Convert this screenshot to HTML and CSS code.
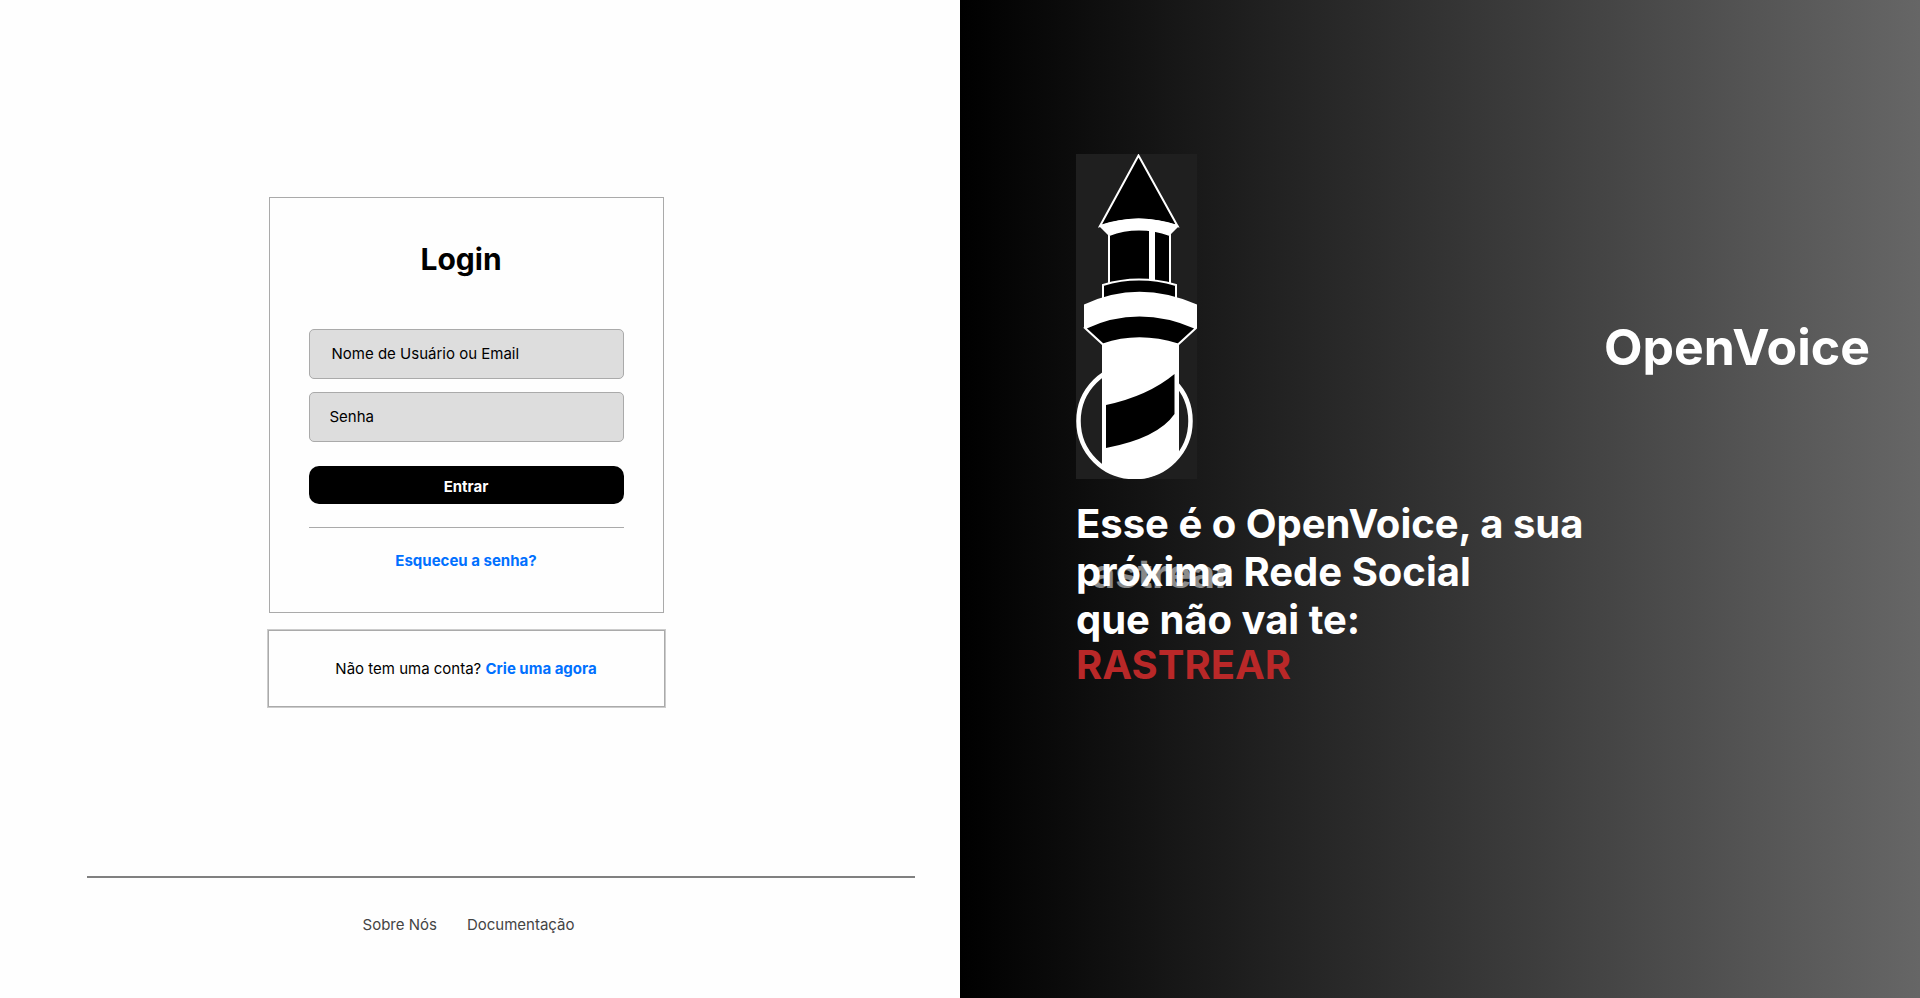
FILE: index.html
```html
<!DOCTYPE html>
<html lang="pt-BR">
<head>
<meta charset="utf-8">
<title>OpenVoice - Login</title>
<link rel="stylesheet" href="styles.css">
</head>
<body>
<div class="page">
  <div class="access">
    <main class="access-main">
      <form class="card login">
        <h1 class="login-title">Login</h1>
        <input class="field field-user" type="text" aria-label="Nome de Usuário ou Email" placeholder="Nome de Usuário ou Email">
        <input class="field" type="password" aria-label="Senha" placeholder="Senha">
        <button class="submit" type="submit">Entrar</button>
        <hr class="divider">
        <a class="link" href="#">Esqueceu a senha?</a>
      </form>
      <p class="card signup">Não tem uma conta? <a class="link" href="#">Crie uma agora</a></p>
    </main>
    <footer class="footer">
      <a class="footer-link" href="#">Sobre Nós</a>
      <a class="footer-link" href="#">Documentação</a>
    </footer>
  </div>
  <aside class="brand">
    <div class="brand-head">
      <svg class="logo" viewBox="0 0 121 325" role="img" aria-label="Farol">
        <rect width="121" height="325" fill="#1f1f1f"/>
        <circle cx="58.500" cy="267" r="56" fill="none" stroke="#fff" stroke-width="4.500"/>
        <path d="M62.500 1.500L24 72Q62.500 59 101.500 72Z" fill="#000" stroke="#fff" stroke-width="2"/>
        <path d="M23 72Q62.500 57 103 72L94 81Q62.500 70 32 81Z" fill="#fff"/>
        <path d="M33 81Q62.500 70 94 81V131Q62.500 121 33 131Z" fill="#000" stroke="#fff" stroke-width="2"/>
        <path d="M73 74H79V127H73Z" fill="#fff"/>
        <path d="M27 131Q62.500 120 100 131V148H27Z" fill="#000" stroke="#fff" stroke-width="2"/>
        <path d="M8 150.500Q62.500 125 121 150.500V174H8Z" fill="#fff"/>
        <path d="M9 174Q62.500 149 120 174L102 190.500Q62.500 178 27 190.500Z" fill="#000" stroke="#fff" stroke-width="2"/>
        <path d="M26 190.500Q62.500 178 103 190.500V303Q84 325 59 325Q41 325 26 311Z" fill="#fff"/>
        <path d="M30 251Q72 242 98.500 220V260Q82 284 30 294Z" fill="#000"/>
      </svg>
      <h2 class="brand-name">OpenVoice</h2>
    </div>
    <div class="pitch">
      <p class="pitch-text">Esse é o OpenVoice, a sua<br>próxima Rede Social<br>que não vai te:</p>
      <span class="pitch-ghost" aria-hidden="true">astrear</span>
      <span class="pitch-word">RASTREAR</span>
    </div>
  </aside>
</div>
</body>
</html>
```
FILE: styles.css
```css
* {
  box-sizing: border-box;
  margin: 0;
}

body {
  font: 16px/20px Inter, sans-serif;
  color: #000;
  background: #fefefe;
}

.page {
  display: grid;
  grid-template-columns: 1fr 1fr;
  min-height: 100vh;
}

.access {
  display: flex;
  flex-direction: column;
  justify-content: space-between;
  padding: 197px 45px 63px 87px;
}

.access-main {
  display: flex;
  flex-direction: column;
  align-items: center;
  gap: 17px;
  padding-right: 70px;
}

.card {
  border: 1px solid #aaa;
}

.login {
  display: flex;
  flex-direction: column;
  align-items: center;
  width: 395px;
  padding: 41px 39px;
}

.login-title {
  font-size: 30px;
  line-height: 40px;
  padding-right: 10px;
  margin-bottom: 50px;
}

.field {
  width: 100%;
  height: 50px;
  padding: 0 20px 2px;
  margin-bottom: 13px;
  font: inherit;
  font-size: 15px;
  background: #ddd;
  border: 1px solid #aaa;
  border-radius: 5px;
}

.field-user {
  padding-left: 22px;
}

.field::placeholder {
  color: #000;
  opacity: 1;
}

.submit {
  width: 100%;
  height: 38px;
  margin-top: 11px;
  padding: 3px 0 0;
  font: inherit;
  font-size: 15px;
  font-weight: 700;
  color: #fff;
  background: #000;
  border: 0;
  border-radius: 10px;
}

.divider {
  width: 100%;
  margin: 23px 0;
  border: 0;
  border-top: 1px solid #aaa;
}

.link {
  font-size: 15px;
  font-weight: 700;
  color: #0070ff;
  text-decoration: none;
}

.signup {
  width: 397px;
  padding: 28px 0 27px;
  font-size: 15px;
  text-align: center;
  box-shadow: 0 0 0 1px #ccc;
}

.footer {
  display: flex;
  justify-content: center;
  gap: 30px;
  padding: 37px 65px 0 0;
  border-top: 2px solid #808080;
}

.footer-link {
  font-size: 15px;
  color: #444;
  text-decoration: none;
}

.brand {
  padding: 154px 50px 0 116px;
  color: #fff;
  background: linear-gradient(90deg, #000, #666);
}

.brand-head {
  display: flex;
  align-items: center;
  justify-content: space-between;
}

.logo {
  width: 121px;
  height: 325px;
}

.brand-name {
  padding-top: 60px;
  font-size: 50px;
  line-height: 60px;
}

.pitch {
  position: relative;
  margin-top: 21px;
  font-size: 40px;
  font-weight: 700;
  line-height: 48px;
}

.pitch-ghost {
  position: absolute;
  top: 50px;
  left: 16px;
  opacity: 0.5;
}

.pitch-word {
  display: block;
  line-height: 42px;
  color: #b92828;
}
```
